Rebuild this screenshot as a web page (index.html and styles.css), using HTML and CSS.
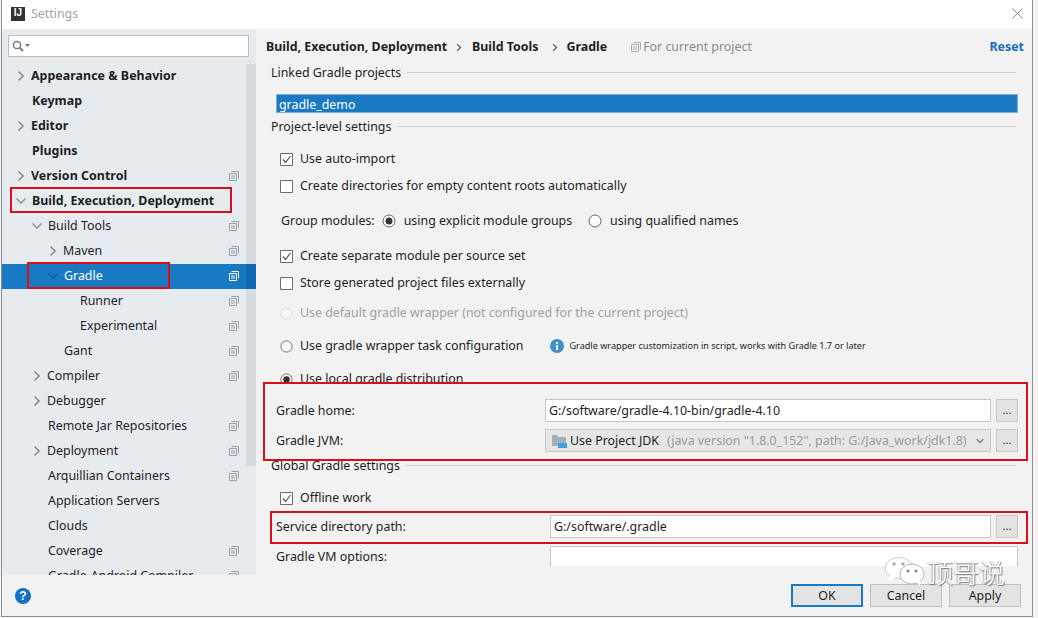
FILE: index.html
```html
<!DOCTYPE html>
<html lang="en">
<head>
<meta charset="utf-8">
<title>Settings</title>
<link rel="stylesheet" href="styles.css">
</head>
<body>
<svg class="defs" width="0" height="0">
  <symbol id="copy" viewBox="0 0 10 10"><path d="M2.5 .5H9.5V7.5M.5 2.5H7.5V9.5H.5Z M2 5H6M2 7H6" fill="none" stroke="currentColor"/></symbol>
  <symbol id="right" viewBox="0 0 8 12"><path d="M1.5 1.5L6 6L1.5 10.5" fill="none" stroke="currentColor" stroke-width="1.7"/></symbol>
  <symbol id="down" viewBox="0 0 12 8"><path d="M1.5 1.5L6 6L10.5 1.5" fill="none" stroke="currentColor" stroke-width="1.7"/></symbol>
  <symbol id="check" viewBox="0 0 13 13"><path d="M.5 .5H12.5V12.5H.5Z" fill="#fff" stroke="#6b6b6b"/><path d="M3 6.5L5.5 9.5L10.5 3" fill="none" stroke="#555" stroke-width="1.2"/></symbol>
  <symbol id="uncheck" viewBox="0 0 13 13"><path d="M.5 .5H12.5V12.5H.5Z" fill="#fff" stroke="#6b6b6b"/></symbol>
  <symbol id="radio" viewBox="0 0 14 14"><circle cx="7" cy="7" r="6" fill="#fff" stroke="#666"/></symbol>
  <symbol id="radio-on" viewBox="0 0 14 14"><circle cx="7" cy="7" r="6" fill="#fff" stroke="#666"/><circle cx="7" cy="7" r="3.5" fill="#333"/></symbol>
  <symbol id="radio-off" viewBox="0 0 14 14"><circle cx="7" cy="7" r="6" fill="#f6f6f6" stroke="#d8d8d8"/></symbol>
</svg>
<div class="window">
  <header class="titlebar">
    <span class="logo"><span class="logo-text">IJ</span></span>
    <span class="title">Settings</span>
    <svg class="close" width="11" height="11" viewBox="0 0 11 11"><path d="M.5 .5L10.5 10.5M10.5 .5L.5 10.5" stroke="#8c8c8c" fill="none"/></svg>
  </header>
  <div class="main">
    <aside class="sidebar">
      <div class="search-wrap">
        <div class="search">
          <svg width="19" height="12" viewBox="0 0 19 12"><circle cx="5" cy="5" r="3.6" fill="none" stroke="#777" stroke-width="1.5"/><path d="M7.8 7.8L11 11" stroke="#777" stroke-width="1.8"/><path d="M13 4H18L15.5 7Z" fill="#777"/></svg>
        </div>
      </div>
      <div class="tree-wrap">
        <ul class="tree">
          <li class="node d0 strong"><svg class="chev"><use href="#right"/></svg><span>Appearance &amp; Behavior</span></li>
          <li class="node d0 strong"><span class="slot"></span><span>Keymap</span></li>
          <li class="node d0 strong"><svg class="chev"><use href="#right"/></svg><span>Editor</span></li>
          <li class="node d0 strong"><span class="slot"></span><span>Plugins</span></li>
          <li class="node d0 strong"><svg class="chev"><use href="#right"/></svg><span>Version Control</span><svg class="copy"><use href="#copy"/></svg></li>
          <li class="node d0 strong"><svg class="chev-d"><use href="#down"/></svg><span>Build, Execution, Deployment</span></li>
          <li class="node d1"><svg class="chev-d"><use href="#down"/></svg><span>Build Tools</span><svg class="copy"><use href="#copy"/></svg></li>
          <li class="node d2"><svg class="chev"><use href="#right"/></svg><span>Maven</span><svg class="copy"><use href="#copy"/></svg></li>
          <li class="node d2 selected"><svg class="chev-d"><use href="#down"/></svg><span>Gradle</span><svg class="copy"><use href="#copy"/></svg></li>
          <li class="node d3"><span class="slot"></span><span>Runner</span><svg class="copy"><use href="#copy"/></svg></li>
          <li class="node d3"><span class="slot"></span><span>Experimental</span><svg class="copy"><use href="#copy"/></svg></li>
          <li class="node d2"><span class="slot"></span><span>Gant</span><svg class="copy"><use href="#copy"/></svg></li>
          <li class="node d1"><svg class="chev"><use href="#right"/></svg><span>Compiler</span><svg class="copy"><use href="#copy"/></svg></li>
          <li class="node d1"><svg class="chev"><use href="#right"/></svg><span>Debugger</span></li>
          <li class="node d1"><span class="slot"></span><span>Remote Jar Repositories</span><svg class="copy"><use href="#copy"/></svg></li>
          <li class="node d1"><svg class="chev"><use href="#right"/></svg><span>Deployment</span><svg class="copy"><use href="#copy"/></svg></li>
          <li class="node d1"><span class="slot"></span><span>Arquillian Containers</span><svg class="copy"><use href="#copy"/></svg></li>
          <li class="node d1"><span class="slot"></span><span>Application Servers</span></li>
          <li class="node d1"><span class="slot"></span><span>Clouds</span></li>
          <li class="node d1"><span class="slot"></span><span>Coverage</span><svg class="copy"><use href="#copy"/></svg></li>
          <li class="node d1"><span class="slot"></span><span>Gradle-Android Compiler</span><svg class="copy"><use href="#copy"/></svg></li>
        </ul>
        <div class="scrollbar"><div class="thumb"></div></div>
      </div>
      <div class="mark mark-build"></div>
      <div class="mark mark-gradle"></div>
    </aside>
    <section class="content">
      <div class="crumbs">
        <span>Build, Execution, Deployment</span>
        <svg class="sep sep-a"><use href="#right"/></svg>
        <span>Build Tools</span>
        <svg class="sep sep-b"><use href="#right"/></svg>
        <span>Gradle</span>
        <svg class="copy crumb-copy"><use href="#copy"/></svg>
        <span class="scope">For current project</span>
        <span class="reset">Reset</span>
      </div>
      <div class="group g-linked"><span>Linked Gradle projects</span><i class="rule"></i></div>
      <div class="list-item">gradle_demo</div>
      <div class="group g-project"><span>Project-level settings</span><i class="rule"></i></div>
      <div class="opt o1"><svg class="box"><use href="#check"/></svg>Use auto-import</div>
      <div class="opt o7"><svg class="box"><use href="#uncheck"/></svg>Create directories for empty content roots automatically</div>
      <div class="opt o15 modules">
        <span class="modules-label">Group modules:</span>
        <svg class="rad"><use href="#radio-on"/></svg><span class="modules-a">using explicit module groups</span>
        <svg class="rad"><use href="#radio"/></svg><span>using qualified names</span>
      </div>
      <div class="opt o15"><svg class="box"><use href="#check"/></svg>Create separate module per source set</div>
      <div class="opt o7"><svg class="box"><use href="#uncheck"/></svg>Store generated project files externally</div>
      <div class="opt o10 off"><svg class="box"><use href="#radio-off"/></svg>Use default gradle wrapper (not configured for the current project)</div>
      <div class="opt o13">
        <svg class="box"><use href="#radio"/></svg><span>Use gradle wrapper task configuration</span>
        <svg class="info" width="14" height="14" viewBox="0 0 14 14"><circle cx="7" cy="7" r="7" fill="#3f8fcb"/><rect x="6" y="6" width="2" height="5" fill="#fff"/><rect x="6" y="3" width="2" height="2" fill="#fff"/></svg>
        <span class="hint">Gradle wrapper customization in script, works with Gradle 1.7 or later</span>
      </div>
      <div class="opt o13"><svg class="box"><use href="#radio-on"/></svg>Use local gradle distribution</div>
      <div class="redbox local">
        <div class="field-row">
          <label>Gradle home:</label>
          <div class="input">G:/software/gradle-4.10-bin/gradle-4.10</div>
          <div class="dots">...</div>
        </div>
        <div class="field-row">
          <label>Gradle JVM:</label>
          <div class="input combo">
            <svg class="jdk" width="15" height="14" viewBox="0 0 15 14"><path d="M0 1H5L6 3H14V12H0Z" fill="#a3afba"/><rect x="6" y="9" width="9" height="5" fill="#3fa3d8"/></svg>
            <span>Use Project JDK</span><span class="muted">(java version "1.8.0_152", path: G:/Java_work/jdk1.8)</span>
            <svg class="combo-arrow" width="10" height="6"><use href="#down"/></svg>
          </div>
          <div class="dots">...</div>
        </div>
      </div>
      <div class="group g-global"><span>Global Gradle settings</span><i class="rule"></i></div>
      <div class="opt o-offline"><svg class="box"><use href="#check"/></svg>Offline work</div>
      <div class="redbox service">
        <div class="field-row">
          <label>Service directory path:</label>
          <div class="input">G:/software/.gradle</div>
          <div class="dots">...</div>
        </div>
      </div>
      <div class="field-row vm">
        <label>Gradle VM options:</label>
        <div class="input vm-input"></div>
      </div>
    </section>
  </div>
  <footer class="footer">
    <span class="help">?</span>
    <div class="buttons">
      <button class="btn primary">OK</button>
      <button class="btn">Cancel</button>
      <button class="btn">Apply</button>
    </div>
  </footer>
  <div class="watermark">
    <svg width="42" height="30" viewBox="0 0 42 30"><ellipse cx="16" cy="11" rx="14" ry="10.5" fill="#fff" stroke="#c9c9c9"/><path d="M7 18L6 24L13 20Z" fill="#fff"/><ellipse cx="29" cy="17" rx="12" ry="10" fill="#fff" stroke="#b5b5b5"/><path d="M34 25L37 29L37 22Z" fill="#fff"/><circle cx="11" cy="7" r="1.7" fill="#aaa"/><circle cx="20" cy="7" r="1.7" fill="#aaa"/><circle cx="25" cy="14" r="1.5" fill="#888"/><circle cx="33" cy="14" r="1.5" fill="#888"/></svg>
    <span class="wm-text">顶哥说</span>
  </div>
</div>
</body>
</html>
```
FILE: styles.css
```css
* { box-sizing: border-box; }
html, body { margin: 0; padding: 0; }
body { width: 1038px; height: 618px; overflow: hidden; background: #f4f4f4; font: 12.4px/20px "Noto Sans", sans-serif; color: #1e1e1e; }
.defs { position: absolute; }
ul { list-style: none; margin: 0; padding: 0; }

.window { position: relative; width: 1032px; height: 617px; margin-left: 1px; border: 1px solid #8f8f8f; border-top: 0; display: flex; flex-direction: column; background: #f2f2f2; overflow: hidden; }

.titlebar { height: 29px; flex: none; background: #fff; display: flex; align-items: center; padding: 0 0 1px 9px; }
.logo { width: 14px; height: 14px; background: #333; display: block; position: relative; }
.logo-text { display: block; color: #fff; font: bold 10px/11px "Liberation Sans", sans-serif; text-align: center; }
.title { margin-left: 6px; color: #a3a3a3; font-size: 12.4px; }
.close { margin-left: auto; margin-right: 9px; margin-top: -1px; }

.main { flex: 1; display: flex; min-height: 0; }
.sidebar { position: relative; width: 254px; flex: none; background: #e6ebf0; display: flex; flex-direction: column; }
.search-wrap { height: 35px; flex: none; padding: 6px 7px 0 6px; }
.search { height: 22px; width: 241px; background: #fff; border: 1px solid #bdbdbd; display: flex; align-items: center; padding-left: 3px; }
.tree-wrap { position: relative; flex: 1; overflow: hidden; }
.node { height: 25px; display: flex; align-items: center; padding-right: 17px; padding-bottom: 2px; white-space: nowrap; }
.node.strong { font-weight: 700; letter-spacing: .04px; }
.d0 { padding-left: 12px; }
.d1 { padding-left: 28px; }
.d2 { padding-left: 44px; }
.d3 { padding-left: 60px; }
.slot { width: 18px; flex: none; }
.chev { width: 8px; height: 12px; margin: 0 6px 0 3px; flex: none; color: #8f8f8f; }
.chev-d { width: 12px; height: 8px; margin: 0 5px 0 1px; flex: none; color: #8f9aa5; }
.copy { width: 10px; height: 10px; margin-left: auto; flex: none; color: #98a1aa; }
.selected { background: #1a79c3; color: #fff; position: relative; }
.selected .copy { color: #fff; }
.selected .chev-d { color: #0e5f9f; }
.scrollbar { position: absolute; top: 0; right: 0; bottom: 0; width: 10px; }
.thumb { height: 402px; background: #d6dbe0; }
.selected::after { content: ""; position: absolute; right: 0; top: 0; bottom: 0; width: 10px; background: #0f69b2; z-index: 2; }

.mark { position: absolute; border: 2px solid #d5101c; z-index: 3; }
.mark-build { left: 8px; top: 158px; width: 222px; height: 26px; }
.mark-gradle { left: 25px; top: 233px; width: 143px; height: 27px; }

.content { flex: 1; min-width: 0; overflow: hidden; position: relative; }
.crumbs { height: 34px; display: flex; align-items: center; padding: 2px 8px 0 10px; font-weight: 700; white-space: nowrap; }
.sep { width: 6px; height: 9px; color: #555; }
.sep-a { margin: 0 10px 0 9px; }
.sep-b { margin: 0 9px 0 13px; }
.crumb-copy { margin: 0 0 0 24px; color: #aab0b6; }
.scope { margin-left: 2px; font-weight: 400; color: #8a8a8a; }
.reset { margin-left: auto; color: #1a6eb5; }

.group { height: 18px; display: flex; align-items: center; padding: 2px 0 0 15px; white-space: nowrap; }
.rule { flex: 1; height: 1px; margin: 0 16px 0 6px; background: #cfcfcf; position: relative; top: -1px; }
.list-item { height: 19px; margin: 13px 14px 0 20px; padding-left: 2px; background: #1a79c3; border: 1px solid #7aaed6; color: #fff; line-height: 19px; }
.g-project { margin-top: 4px; }

.opt { height: 20px; display: flex; align-items: center; padding: 2px 0 0 24px; white-space: nowrap; }
.box { width: 13px; height: 13px; margin-right: 7px; flex: none; }
.rad { width: 14px; height: 14px; margin-right: 8px; flex: none; }
.o1 { margin-top: 13px; }
.o7 { margin-top: 7px; }
.o15 { margin-top: 15px; }
.o10 { margin-top: 10px; }
.o13 { margin-top: 13px; }
.modules-label { margin: 0 7px 0 1px; }
.modules-a { margin-right: 16px; }
.off { color: #a0a0a0; }
.info { margin-left: 27px; margin-right: 5px; }
.hint { font-size: 9.1px; }

.redbox { position: relative; border: 2px solid #d5101c; background: #f2f2f2; }
.local { width: 765px; height: 79px; margin: -6px 0 0 7px; padding-top: 15px; display: flex; flex-direction: column; gap: 7px; z-index: 2; }
.field-row { height: 23px; display: flex; align-items: center; flex: none; }
.field-row label { flex: none; }
.local label { width: 280px; padding-left: 11px; }
.input { width: 446px; height: 23px; background: #fff; border: 1px solid #c6c6c6; padding-left: 3px; line-height: 21px; white-space: nowrap; overflow: hidden; }
.dots { width: 22px; height: 23px; margin-left: 5px; background: #e3e3e3; border: 1px solid #c9c9c9; text-align: center; line-height: 20px; font-size: 11px; flex: none; }
.combo { background: #e6e6e6; display: flex; align-items: center; }
.jdk { margin: 0 3px 0 3px; flex: none; }
.muted { color: #9a9a9a; margin-left: 8px; }
.combo-arrow { margin-left: auto; margin-right: 5px; color: #777; }

.g-global { margin-top: -5px; position: relative; z-index: 1; }
.o-offline { margin-top: 13px; }
.service { width: 758px; height: 33px; margin: 4px 0 0 14px; padding: 2px 0 0 4px; }
.service label { width: 274px; }
.service .input { width: 441px; }
.vm { margin-top: 2px; padding-left: 20px; height: 20px; }
.vm label { width: 274px; padding-top: 2px; }
.vm-input { width: 468px; height: 20px; border-bottom: 0; }

.footer { height: 41px; flex: none; display: flex; align-items: center; padding: 0 11px 0 12px; background: #f2f2f2; }
.help { width: 16px; height: 16px; margin-left: 1px; border-radius: 50%; background: #1470c4; color: #fff; font: bold 12px/16px "Liberation Sans", sans-serif; text-align: center; }
.buttons { margin-left: auto; display: flex; gap: 7px; }
.btn { width: 72px; height: 23px; padding: 0; border: 1px solid #c0c0c0; background: #e3e3e3; font: 12.4px/20px "Noto Sans", sans-serif; color: #1e1e1e; }
.primary { border: 2px solid #1a79c3; }

.watermark { position: absolute; left: 881px; top: 557px; display: flex; align-items: center; gap: 2px; z-index: 4; }
.wm-text { font: 300 26px/30px "Noto Sans CJK SC", sans-serif; color: #fff; text-shadow: 1px 1px 1px #777, -1px 0 1px #aaa; }
```
